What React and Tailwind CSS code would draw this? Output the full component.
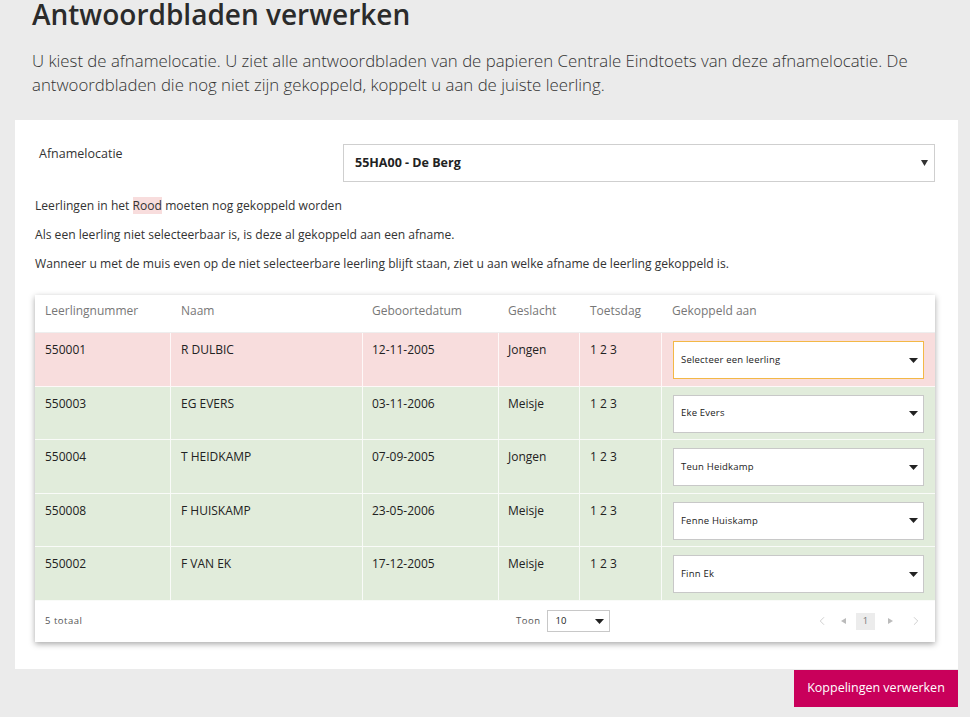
import { ChevronLeft, ChevronRight } from 'lucide-react'

const rows = [
  { nr: '550001', naam: 'R DULBIC', datum: '12-11-2005', geslacht: 'Jongen', gekoppeld: 'Selecteer een leerling', open: true },
  { nr: '550003', naam: 'EG EVERS', datum: '03-11-2006', geslacht: 'Meisje', gekoppeld: 'Eke Evers' },
  { nr: '550004', naam: 'T HEIDKAMP', datum: '07-09-2005', geslacht: 'Jongen', gekoppeld: 'Teun Heidkamp' },
  { nr: '550008', naam: 'F HUISKAMP', datum: '23-05-2006', geslacht: 'Meisje', gekoppeld: 'Fenne Huiskamp' },
  { nr: '550002', naam: 'F VAN EK', datum: '17-12-2005', geslacht: 'Meisje', gekoppeld: 'Finn Ek' },
]

function Caret({ className = '' }) {
  return (
    <svg width="9" height="5" viewBox="0 0 9 5" className={className}>
      <path d="M0 0h9L4.5 5z" fill="#222" />
    </svg>
  )
}

function Row({ row }) {
  const bg = row.open ? 'bg-[#f8dddd]' : 'bg-[#e1ecdb]'
  const cell = 'pt-[8px] px-[10px] border-r border-white/80'
  return (
    <div className={`grid grid-cols-[136px_192px_136px_81px_82px_1fr] h-[53.6px] border-b border-white/80 ${bg}`}>
      <div className={cell}>{row.nr}</div>
      <div className={cell}>{row.naam}</div>
      <div className={`${cell} pl-[9px]`}>{row.datum}</div>
      <div className={`${cell} pl-[9px]`}>{row.geslacht}</div>
      <div className={cell}>1 2 3</div>
      <div className="pt-[8px] pl-[11px] pr-[11px]">
        <div
          className={`h-[38px] bg-white flex items-center justify-between pl-[7px] pr-[5px] text-[9.5px] text-[#222] border ${
            row.open ? 'border-[#f3b846]' : 'border-[#c8c8c8]'
          }`}
        >
          <span className="tracking-[0.2px]">{row.gekoppeld}</span>
          <Caret />
        </div>
      </div>
    </div>
  )
}

export default function App() {
  return (
    <div className="w-[970px] h-[717px] bg-[#ebebeb] overflow-hidden font-['Open_Sans',sans-serif] text-[#333]">
      <h1 className="pl-[32px] -mt-[6px] text-[28px] font-semibold text-[#2b2b2b] leading-[40px]">
        Antwoordbladen verwerken
      </h1>
      <p className="pl-[32px] pr-[30px] mt-[15px] text-[16.8px] font-light leading-[24px] text-[#333]">
        U kiest de afnamelocatie. U ziet alle antwoordbladen van de papieren Centrale Eindtoets van deze afnamelocatie. De
        antwoordbladen die nog niet zijn gekoppeld, koppelt u aan de juiste leerling.
      </p>

      <div className="ml-[15px] mr-[12px] mt-[23px] bg-white h-[549px] pt-[24px] pl-[20px] pr-[23px] text-[12px]">
        <div className="flex">
          <div className="w-[308px] pl-[4px] pt-[1px] text-[12.5px]">Afnamelocatie</div>
          <div className="flex-1 h-[38px] border border-[#cfcfcf] flex items-center justify-between pl-[11px] pr-[6px]">
            <span className="font-bold text-[12.5px] text-[#222]">55HA00 - De Berg</span>
            <svg width="7" height="6" viewBox="0 0 7 6">
              <path d="M0 0h7L3.5 6z" fill="#333" />
            </svg>
          </div>
        </div>

        <div className="mt-[14px] space-y-[10px] text-[12.1px] leading-[19px]">
          <p>
            Leerlingen in het <span className="bg-[#f8dddd]">Rood</span> moeten nog gekoppeld worden
          </p>
          <p>Als een leerling niet selecteerbaar is, is deze al gekoppeld aan een afname.</p>
          <p>Wanneer u met de muis even op de niet selecteerbare leerling blijft staan, ziet u aan welke afname de leerling gekoppeld is.</p>
        </div>

        <div className="mt-[22px] bg-white shadow-[0_2px_6px_rgba(0,0,0,0.35)] text-[12px] text-[#222]">
          <div className="grid grid-cols-[136px_192px_136px_81px_82px_1fr] h-[38px] pt-[7px] text-[#777] border-b border-[#eee]">
            <div className="px-[10px]">Leerlingnummer</div>
            <div className="px-[10px]">Naam</div>
            <div className="px-[9px]">Geboortedatum</div>
            <div className="px-[9px]">Geslacht</div>
            <div className="px-[10px]">Toetsdag</div>
            <div className="px-[10px]">Gekoppeld aan</div>
          </div>
          {rows.map(r => (
            <Row key={r.nr} row={r} />
          ))}
          <div className="h-[41px] flex items-center pl-[10px] pr-[12px] text-[9.5px] text-[#555]">
            <span className="w-[471px] tracking-[0.5px]">5 totaal</span>
            <span className="tracking-[0.5px]">Toon</span>
            <div className="ml-[6px] w-[63px] h-[22px] border border-[#c8c8c8] flex items-center justify-between pl-[8px] pr-[5px] text-[#222]">
              <span>10</span>
              <Caret />
            </div>
            <div className="ml-auto flex items-center text-[#bbb]">
              <ChevronLeft size={14} strokeWidth={1.2} />
              <svg width="5" height="6" viewBox="0 0 5 6" className="ml-[12px]">
                <path d="M5 0v6L0 3z" fill="#bbb" />
              </svg>
              <span className="ml-[10px] w-[19px] h-[17px] bg-[#ececec] text-[#777] flex items-center justify-center">1</span>
              <svg width="5" height="6" viewBox="0 0 5 6" className="ml-[13px]">
                <path d="M0 0v6L5 3z" fill="#bbb" />
              </svg>
              <ChevronRight size={14} strokeWidth={1.2} className="ml-[16px]" />
            </div>
          </div>
        </div>
      </div>

      <div className="flex justify-end pr-[12px] mt-[1px]">
        <button className="w-[164px] h-[37px] bg-[#c9005b] text-white text-[12.5px]">Koppelingen verwerken</button>
      </div>
    </div>
  )
}
